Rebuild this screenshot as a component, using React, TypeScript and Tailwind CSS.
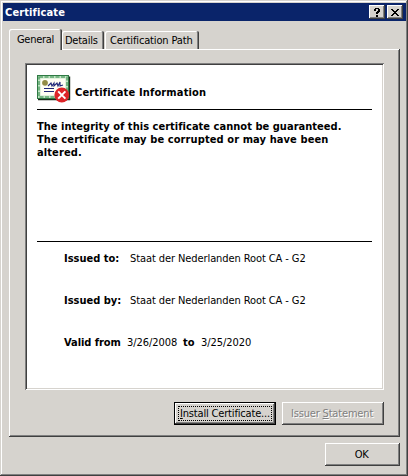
import type { ReactNode } from "react";
import { clsx } from "clsx";

// Classic two-pixel bevels, drawn with inset shadows so they take no layout space.
const raised =
  "shadow-[inset_-1px_-1px_#404040,inset_1px_1px_#ffffff,inset_-2px_-2px_#808080]";

// The selected tab is taller and covers the top edge of the panel below it.
const TABS = [
  { label: "General", box: "relative -mb-px h-[21px] w-[53px] pl-2 pt-[4px] tracking-[-0.3px]" },
  { label: "Details", box: "h-[18px] w-[42px] pl-[3px] pt-[3px] tracking-[-0.25px]" },
  { label: "Certification Path", box: "ml-px h-[18px] w-[94px] pl-[5px] pt-[3px] tracking-[-0.15px]" },
];

function CertificateIcon() {
  return (
    <svg width="36" height="30" viewBox="0 0 36 30" aria-hidden className="block">
      <path d="M1 24.5H32.5V1.5" fill="none" stroke="#1d2a1d" strokeWidth="1.4" />
      <rect x="0.5" y="0.5" width="31" height="23" fill="#c4e4c6" stroke="#2f7a44" />
      <rect x="2" y="2" width="28" height="20" fill="none" stroke="#5fa870" strokeWidth="1.6" strokeDasharray="4 1.5" />
      <rect x="3.5" y="3.5" width="25" height="17" fill="#fffff4" />
      <circle cx="8" cy="7.8" r="2.9" fill="#938d45" />
      <path
        d="M11 11l3-3 1 3 2-3v3l3-3 1 3 2-4v4l3-1M7 13.5h10M7 16.5h10"
        fill="none"
        stroke="#202878"
        strokeWidth="1.1"
      />
      <circle cx="24.8" cy="20" r="7.4" fill="#dc2428" />
      <path d="M21.2 16.4l7.2 7.2m0-7.2l-7.2 7.2" stroke="#fff" strokeWidth="2" />
    </svg>
  );
}

function CaptionButton({ label, children }: { label: string; children: ReactNode }) {
  return (
    <button
      aria-label={label}
      className={clsx("flex h-[14px] w-4 items-center justify-center bg-[#d6d3ce]", raised)}
    >
      {children}
    </button>
  );
}

function TitleBar() {
  return (
    <header className="flex h-[18px] w-[403px] items-center bg-[#0a246a] pl-[2px] pr-[3px]">
      <h1 className="pt-[2px] font-bold leading-[14px] tracking-[0.12px] text-white">Certificate</h1>
      <div className="ml-auto flex gap-[2px]">
        <CaptionButton label="Help">
          <svg width="6" height="9" viewBox="0 0 6 9" aria-hidden shapeRendering="crispEdges">
            <path d="M1 0h4v1h1v3H5v1H4v1H2V4h1V3h1V1H2v2H0V1h1zM2 7h2v2H2z" />
          </svg>
        </CaptionButton>
        <CaptionButton label="Close">
          <svg width="8" height="7" viewBox="0 0 8 7" aria-hidden shapeRendering="crispEdges">
            <path d="M0 0h2v1h1v1h2V1h1V0h2v1H7v1H6v1H5v1h1v1h1v1h1v1H6V6H5V5H3v1H2v1H0V6h1V5h1V4h1V3H2V2H1V1H0z" />
          </svg>
        </CaptionButton>
      </div>
    </header>
  );
}

function Field({ label, value }: { label: string; value: string }) {
  return (
    <div className="flex h-[42px]">
      <dt className="w-[66px] font-bold">{label}</dt>
      <dd className="tracking-[-0.09px]">{value}</dd>
    </div>
  );
}

export default function App() {
  return (
    <main
      className={clsx(
        "flex h-[476px] w-[408px] flex-col overflow-hidden whitespace-nowrap bg-[#d6d3ce] pl-[3px] pt-[3px] text-[11px] leading-[13px] text-black",
        "font-['DejaVu_Sans_Condensed','DejaVu_Sans',sans-serif]",
        "shadow-[inset_-1px_-1px_#404040,inset_1px_1px_#d6d3ce,inset_-2px_-2px_#808080,inset_2px_2px_#ffffff]",
      )}
    >
      <TitleBar />

      <nav className="relative flex h-[28px] items-end pl-[6px]">
        {TABS.map((tab) => (
          <button
            key={tab.label}
            className={clsx(
              "flex shrink-0 items-start rounded-t-[2px] bg-[#d6d3ce] shadow-[inset_-1px_0_#404040,inset_1px_1px_#ffffff,inset_-2px_0_#808080]",
              tab.box,
            )}
          >
            {tab.label}
          </button>
        ))}
      </nav>

      <section className={clsx("ml-[6px] flex h-[388px] w-[391px] shrink-0 flex-col px-4 pt-[14px]", raised)}>
        <div className="h-[327px] w-[359px] bg-white pl-3 pt-3 shadow-[inset_1px_1px_#808080,inset_-1px_-1px_#ffffff,inset_2px_2px_#404040,inset_-2px_-2px_#d6d3ce]">
          <div className="flex h-[35px] w-[335px] border-b border-black">
            <CertificateIcon />
            <h2 className="pl-[2px] pt-[11px] font-bold tracking-[0.15px]">Certificate Information</h2>
          </div>
          <p className="h-[131px] pt-[10px] font-bold tracking-[0.1px]">
            <span className="tracking-[0.03px]">The integrity of this certificate cannot be guaranteed.</span>
            <br />
            The certificate may be corrupted or may have been
            <br />
            altered.
          </p>
          <dl className="w-[335px] border-t border-black pl-[27px] pt-[10px]">
            <Field label="Issued to:" value="Staat der Nederlanden Root CA - G2" />
            <Field label="Issued by:" value="Staat der Nederlanden Root CA - G2" />
            <div className="flex tracking-[-0.05px]">
              <dt className="w-[63px] font-bold">Valid from</dt>
              <dd className="w-[56px]">3/26/2008</dd>
              <dt className="w-[18px] font-bold">to</dt>
              <dd>3/25/2020</dd>
            </div>
          </dl>
        </div>

        <div className="flex justify-end gap-[6px] pt-[12px]">
          <button className="h-[23px] w-[102px] border border-black p-[3px] shadow-[inset_-1px_-1px_#404040,inset_1px_1px_#ffffff,inset_-2px_-2px_#808080]">
            <span className="flex h-full items-center justify-center border border-dotted border-black tracking-[-0.17px]">
              <span className="underline">I</span>nstall Certificate...
            </span>
          </button>
          <button
            disabled
            className={clsx("h-[23px] w-[102px] pr-[2px] tracking-[-0.17px] text-[#808080] [text-shadow:1px_1px_#ffffff]", raised)}
          >
            Issuer <span className="underline">S</span>tatement
          </button>
        </div>
      </section>

      <footer className="flex justify-end pr-2 pt-[6px]">
        <button className={clsx("h-[23px] w-[75px] pr-[2px] tracking-[-0.3px]", raised)}>OK</button>
      </footer>
    </main>
  );
}
